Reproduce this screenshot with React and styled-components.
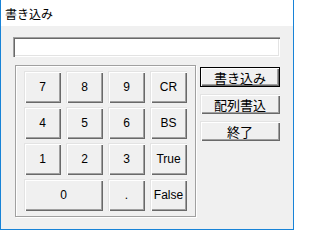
import React from "react";
import styled, { createGlobalStyle } from "styled-components";

const Global = createGlobalStyle`
  html, body { margin: 0; padding: 0; background: #fff; }
  body { font-family: "Liberation Sans", "Noto Sans CJK JP", sans-serif; }
  * { box-sizing: border-box; }
`;

const Window = styled.div`
  width: 294px;
  height: 230px;
  background: #f0f0f0;
  border: 1px solid #1883d7;
  border-top: none;
  display: flex;
  flex-direction: column;
`;

const TitleBar = styled.div`
  height: 26px;
  background: #fff;
  display: flex;
  align-items: center;
  padding-left: 4px;
  font-family: "Noto Sans CJK JP", sans-serif;
  font-size: 12px;
  color: #000;
`;

const Body = styled.div`
  padding: 11px 0 0 12px;
  display: flex;
  flex-direction: column;
  gap: 8px;
`;

const TextBox = styled.div`
  width: 267px;
  height: 20px;
  background: #fff;
  box-shadow: inset 1px 1px 0 #a0a0a0, inset 2px 2px 0 #696969,
    inset -1px -1px 0 #fff, inset -2px -2px 0 #e3e3e3;
`;

const Row = styled.div`
  display: flex;
  align-items: flex-start;
  margin-left: 2px;
`;

const Frame = styled.div`
  width: 181px;
  height: 152px;
  border: 1px solid #a0a0a0;
  box-shadow: inset 1px 1px 0 #fff, 1px 1px 0 #fff;
  padding: 5px 0 0 8px;
  display: grid;
  grid-template-columns: repeat(4, 37px);
  grid-template-rows: repeat(4, 32px);
  column-gap: 5px;
  row-gap: 4px;
  align-content: start;
`;

const Btn = styled.button`
  margin: 0;
  padding: 0;
  border: none;
  background: #f0f0f0;
  font-family: "Liberation Sans", "Noto Sans CJK JP", sans-serif;
  font-size: 12px;
  color: #000;
  display: flex;
  align-items: center;
  justify-content: center;
  box-shadow: inset 1px 1px 0 #e3e3e3, inset 2px 2px 0 #fff,
    inset -1px -1px 0 #696969, inset -2px -2px 0 #a0a0a0;
  grid-column: span ${(p) => p.$span || 1};
`;

const Side = styled.div`
  margin-left: 4px;
  margin-top: 2px;
  display: flex;
  flex-direction: column;
  gap: 7px;
`;

const SideBtn = styled(Btn)`
  width: 80px;
  height: 20px;
  font-family: "Noto Sans CJK JP", sans-serif;
  font-size: 13px;
  line-height: 1;
  ${(p) =>
    p.$default &&
    `box-shadow: inset 0 0 0 1px #000, inset 2px 2px 0 #fff,
      inset -2px -2px 0 #696969, inset -3px -3px 0 #a0a0a0;`}
`;

const keys = [
  ["7"], ["8"], ["9"], ["CR"],
  ["4"], ["5"], ["6"], ["BS"],
  ["1"], ["2"], ["3"], ["True"],
  ["0", 2], ["."], ["False"],
];

export default function App() {
  return (
    <>
      <Global />
      <Window>
        <TitleBar>書き込み</TitleBar>
        <Body>
          <TextBox />
          <Row>
            <Frame>
              {keys.map(([k, span]) => (
                <Btn key={k} $span={span}>{k}</Btn>
              ))}
            </Frame>
            <Side>
              <SideBtn $default>書き込み</SideBtn>
              <SideBtn>配列書込</SideBtn>
              <SideBtn>終了</SideBtn>
            </Side>
          </Row>
        </Body>
      </Window>
    </>
  );
}
